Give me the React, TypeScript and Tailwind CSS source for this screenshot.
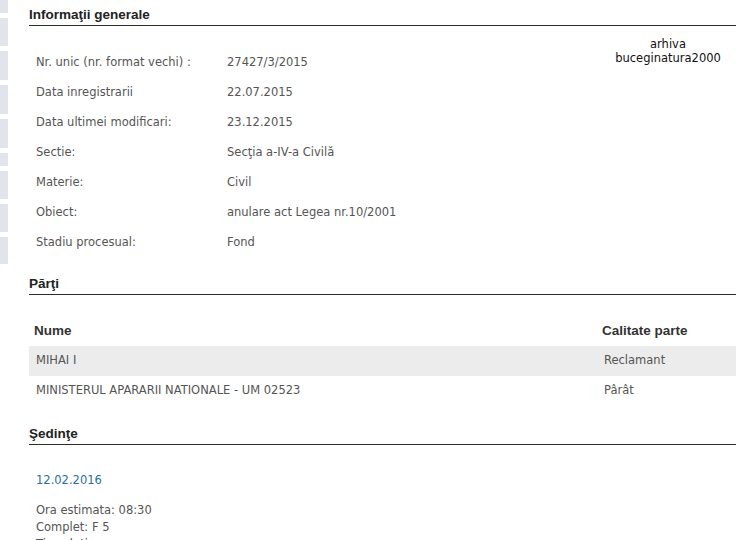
import React from "react";

const body = "font-['DejaVu_Sans',Tahoma,sans-serif]";
const head = "font-['Liberation_Sans',Arial,sans-serif]";

const info: [string, string][] = [
  ["Nr. unic (nr. format vechi) :", "27427/3/2015"],
  ["Data inregistrarii", "22.07.2015"],
  ["Data ultimei modificari:", "23.12.2015"],
  ["Sectie:", "Secţia a-IV-a Civilă"],
  ["Materie:", "Civil"],
  ["Obiect:", "anulare act Legea nr.10/2001"],
  ["Stadiu procesual:", "Fond"],
];

const parti = [
  { nume: "MIHAI I", calitate: "Reclamant" },
  { nume: "MINISTERUL APARARII NATIONALE - UM 02523", calitate: "Pârât" },
];

// benzile gri din stanga (meniu taiat)
const tabs = [13, 28, 29, 29, 29, 13, 28, 28, 27];

function SectionTitle({ title }: { title: string }) {
  return (
    <div className={`${head} border-b border-[#2b2b2b] pt-[7px] pb-[2px] text-[13.5px] leading-[16px] font-bold text-[#222]`}>
      {title}
    </div>
  );
}

export default function App() {
  return (
    <div className={`flex h-[540px] w-[736px] overflow-hidden bg-white ${body}`}>
      <aside className="flex w-[8px] shrink-0 flex-col gap-[5px]">
        {tabs.map((h, i) => (
          <div key={i} className="w-[8px] bg-[#e1e5eb]" style={{ height: h }} />
        ))}
      </aside>

      <main className="ml-[21px] flex-1 text-[11.5px] text-[#555]">
        <SectionTitle title="Informaţii generale" />
        <div className="flex">
          <div className="mt-[22px] flex-1">
            {info.map(([label, value]) => (
              <div key={label} className="flex h-[30px] items-center pl-[7px]">
                <span className="w-[191px] shrink-0">{label}</span>
                <span>{value}</span>
              </div>
            ))}
          </div>
          <div className="mt-[11px] w-[136px] text-center text-[11.5px] leading-[14px] text-[#111]">
            arhiva
            <br />
            buceginatura2000
          </div>
        </div>

        <div className="mt-[11px]">
          <SectionTitle title="Părţi" />
        </div>
        <div className="mt-[22px]">
          <div className={`${head} flex h-[29px] items-center text-[13.5px] font-bold text-[#333]`}>
            <span className="w-[573px] pl-[5px]">Nume</span>
            <span>Calitate parte</span>
          </div>
          {parti.map((p, i) => (
            <div
              key={p.nume}
              className={`flex h-[30px] items-center ${i === 0 ? "bg-[#ececec]" : ""}`}
            >
              <span className="w-[575px] pl-[7px]">{p.nume}</span>
              <span>{p.calitate}</span>
            </div>
          ))}
        </div>

        <div className="mt-[13px]">
          <SectionTitle title="Şedinţe" />
        </div>
        <div className="pl-[7px] pt-[27px]">
          <div className="leading-[17px] text-[#2a6e9e]">12.02.2016</div>
          <div className="mt-[13px] leading-[17px]">
            Ora estimata: 08:30
            <br />
            Complet: F 5
            <br />
            Tip solutie:
          </div>
        </div>
      </main>
    </div>
  );
}
